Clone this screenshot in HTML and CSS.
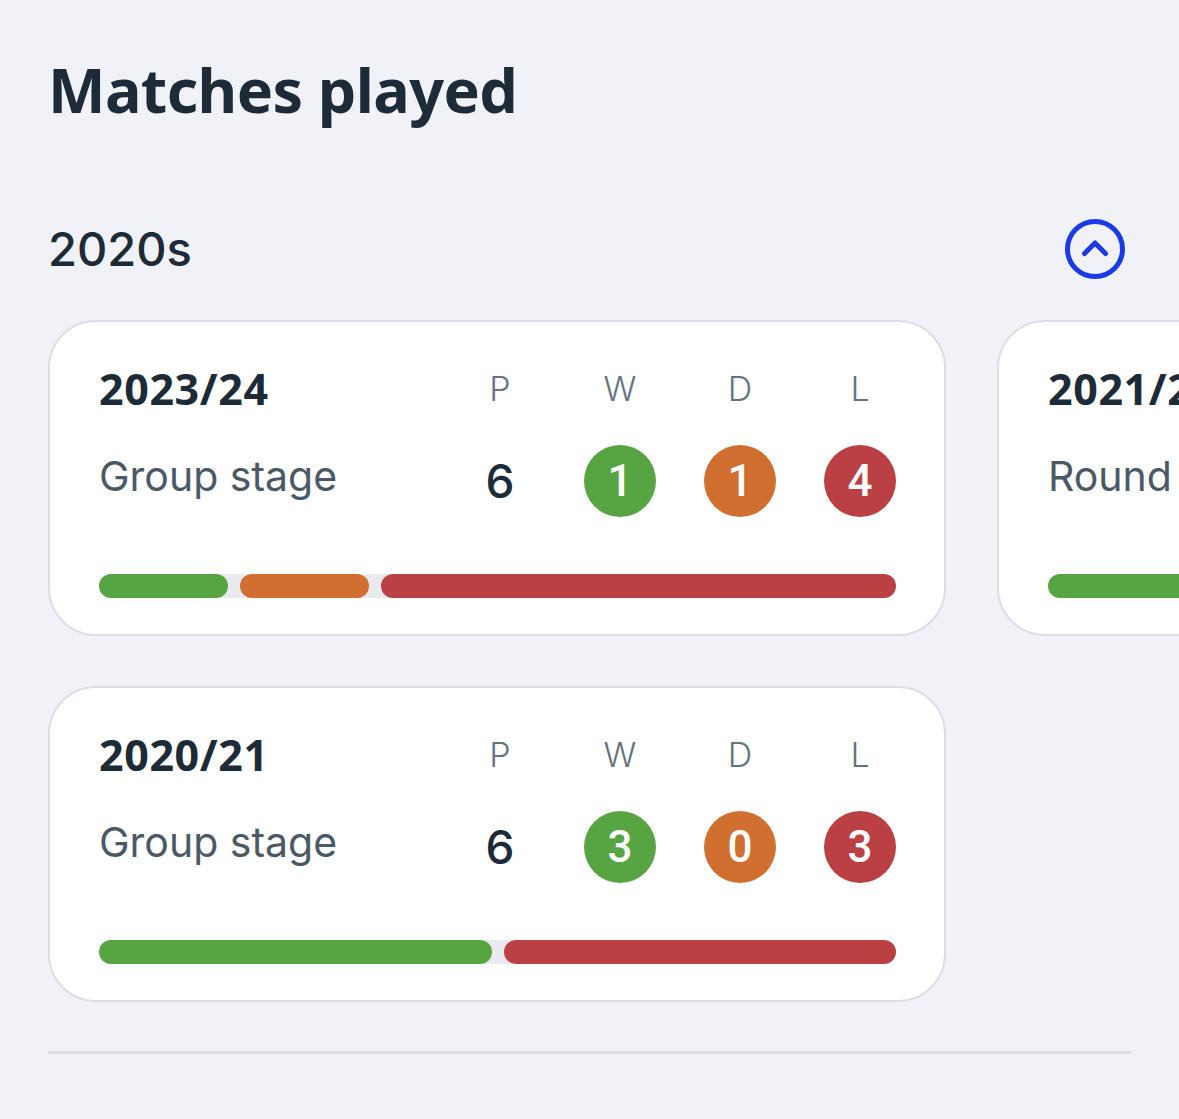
FILE: index.html
```html
<!DOCTYPE html>
<html lang="en">
<head>
<meta charset="utf-8">
<title>Matches played</title>
<link rel="stylesheet" href="styles.css">
</head>
<body>
<main class="page">
  <h1 class="title">Matches played</h1>
  <section class="decade">
    <div class="decade-head">
      <h2 class="decade-title">2020s</h2>
      <button class="toggle" aria-label="Collapse">
        <svg width="62" height="62" viewBox="0 0 62 62" fill="none" stroke="#1a3ae8" stroke-width="5" stroke-linecap="round" stroke-linejoin="round">
          <circle cx="31" cy="31" r="27.5"/>
          <path d="M20.5 35.5 L31 25 L41.5 35.5"/>
        </svg>
      </button>
    </div>
    <div class="cards">
      <article class="card">
        <div class="card-grid">
          <div class="season">2023/24</div>
          <div class="col-label">P</div>
          <div class="col-label">W</div>
          <div class="col-label">D</div>
          <div class="col-label">L</div>
          <div class="stage">Group stage</div>
          <div class="played">6</div>
          <div class="dot win">1</div>
          <div class="dot draw">1</div>
          <div class="dot loss">4</div>
        </div>
        <div class="bar">
          <span class="seg win" style="flex-grow:1"></span>
          <span class="seg draw" style="flex-grow:1"></span>
          <span class="seg loss" style="flex-grow:4"></span>
        </div>
      </article>
      <article class="card">
        <div class="card-grid">
          <div class="season">2021/22</div>
          <div class="col-label">P</div>
          <div class="col-label">W</div>
          <div class="col-label">D</div>
          <div class="col-label">L</div>
          <div class="stage">Round of 16</div>
          <div class="played">8</div>
          <div class="dot win">5</div>
          <div class="dot draw">1</div>
          <div class="dot loss">2</div>
        </div>
        <div class="bar">
          <span class="seg win" style="flex-grow:5"></span>
          <span class="seg draw" style="flex-grow:1"></span>
          <span class="seg loss" style="flex-grow:2"></span>
        </div>
      </article>
      <article class="card">
        <div class="card-grid">
          <div class="season">2020/21</div>
          <div class="col-label">P</div>
          <div class="col-label">W</div>
          <div class="col-label">D</div>
          <div class="col-label">L</div>
          <div class="stage">Group stage</div>
          <div class="played">6</div>
          <div class="dot win">3</div>
          <div class="dot draw">0</div>
          <div class="dot loss">3</div>
        </div>
        <div class="bar">
          <span class="seg win" style="flex-grow:3"></span>
          <span class="seg loss" style="flex-grow:3"></span>
        </div>
      </article>
    </div>
  </section>
  <hr class="divider">
</main>
</body>
</html>
```

FILE: styles.css
```css
* { box-sizing: border-box; }

html, body {
  margin: 0;
  padding: 0;
}

body {
  background: #f0f2f7;
  color: #1d2b38;
  font-family: "Inter", "Noto Sans", sans-serif;
  overflow: hidden;
  width: 1179px;
  height: 1119px;
}

.page {
  padding: 52px 48px 0 48px;
}

.title {
  margin: 0;
  font-family: "Noto Sans", sans-serif;
  font-weight: 700;
  font-size: 61px;
  line-height: 76px;
  color: #1d2b38;
  letter-spacing: -0.6px;
}

.decade {
  margin-top: 90px;
}

.decade-head {
  display: flex;
  align-items: center;
  justify-content: space-between;
  height: 62px;
}

.decade-title {
  margin: 0;
  font-family: "Inter", sans-serif;
  font-weight: 500;
  font-size: 47px;
  line-height: 62px;
  color: #1d2b38;
}

.toggle {
  background: none;
  border: 0;
  padding: 0;
  margin-right: 5px;
  width: 62px;
  height: 62px;
  display: flex;
}

.cards {
  margin-top: 40px;
  display: grid;
  grid-template-columns: 898px 898px;
  column-gap: 51px;
  row-gap: 50px;
  width: 1900px;
}

.card {
  background: #ffffff;
  border: 2px solid #dcdde8;
  border-radius: 48px;
  height: 316px;
  padding: 42px 48px 0 49px;
  display: flex;
  flex-direction: column;
}

.card-grid {
  display: grid;
  grid-template-columns: 1fr 72px 72px 72px 72px;
  column-gap: 48px;
  grid-template-rows: 48px 72px;
  row-gap: 33px;
  align-items: center;
}

.season {
  font-family: "Noto Sans", sans-serif;
  font-weight: 700;
  font-size: 43px;
  letter-spacing: 0.6px;
  color: #1d2b38;
  white-space: nowrap;
}

.col-label {
  text-align: center;
  font-family: "Inter", sans-serif;
  font-weight: 300;
  font-size: 34px;
  color: #66737e;
}

.stage {
  font-family: "Inter", sans-serif;
  font-weight: 400;
  font-size: 41px;
  color: #4b5966;
  white-space: nowrap;
  margin-bottom: 10px;
}

.played {
  text-align: center;
  font-family: "Inter", sans-serif;
  font-weight: 500;
  font-size: 46px;
  color: #1d2b38;
}

.dot {
  width: 72px;
  height: 72px;
  border-radius: 50%;
  color: #ffffff;
  display: flex;
  align-items: center;
  justify-content: center;
  font-family: "Roboto", sans-serif;
  font-weight: 500;
  font-size: 44px;
}

.win { background: #57a542; }
.draw { background: #d06f30; }
.loss { background: #bb4044; }

.bar {
  margin-top: 57px;
  height: 24px;
  display: flex;
  gap: 12px;
  background: #e8eaf0;
  border-radius: 12px;
}

.seg {
  flex-basis: 0;
  border-radius: 12px;
  height: 24px;
}

.divider {
  margin: 49px 0 0 0;
  border: 0;
  height: 3px;
  background: #dcdde6;
}
```
